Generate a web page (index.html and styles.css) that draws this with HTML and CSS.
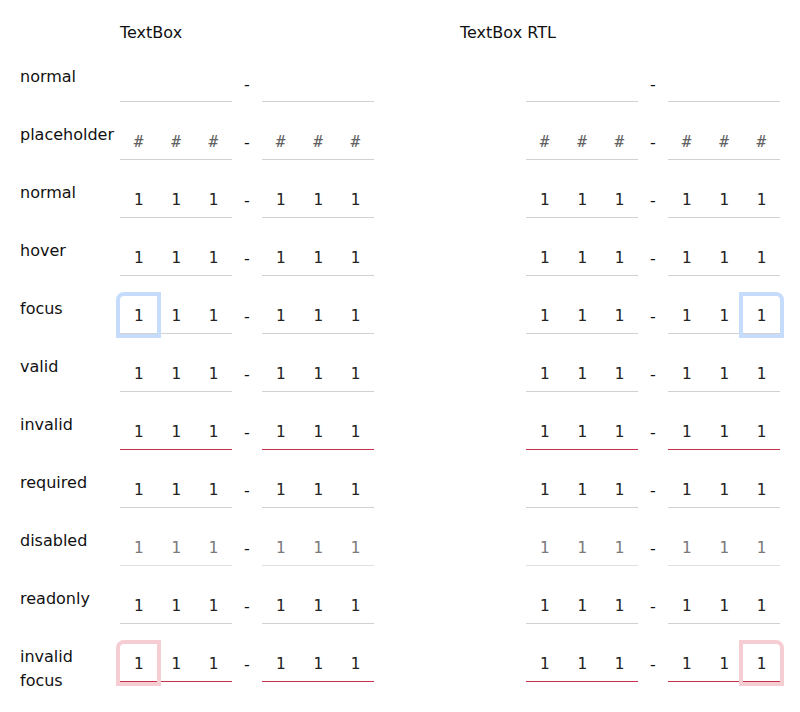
FILE: index.html
```html
<!DOCTYPE html>
<html>
<head>
<meta charset="utf-8">
<link rel="stylesheet" href="styles.css">
</head>
<body>
<div class="grid">
  <div class="label"></div>
  <div class="head">TextBox</div>
  <div class="head">TextBox RTL</div>

  <div class="label"><span>normal</span></div>
  <div class="col"><div class="field"><div class="group"><span class="cell"></span><span class="cell"></span><span class="cell"></span></div><span class="dash">-</span><div class="group"><span class="cell"></span><span class="cell"></span><span class="cell"></span></div></div></div>
  <div class="col" dir="rtl"><div class="field"><div class="group"><span class="cell"></span><span class="cell"></span><span class="cell"></span></div><span class="dash">-</span><div class="group"><span class="cell"></span><span class="cell"></span><span class="cell"></span></div></div></div>

  <div class="label"><span>placeholder</span></div>
  <div class="col"><div class="field ph"><div class="group"><span class="cell">#</span><span class="cell">#</span><span class="cell">#</span></div><span class="dash">-</span><div class="group"><span class="cell">#</span><span class="cell">#</span><span class="cell">#</span></div></div></div>
  <div class="col" dir="rtl"><div class="field ph"><div class="group"><span class="cell">#</span><span class="cell">#</span><span class="cell">#</span></div><span class="dash">-</span><div class="group"><span class="cell">#</span><span class="cell">#</span><span class="cell">#</span></div></div></div>

  <div class="label"><span>normal</span></div>
  <div class="col"><div class="field"><div class="group"><span class="cell">1</span><span class="cell">1</span><span class="cell">1</span></div><span class="dash">-</span><div class="group"><span class="cell">1</span><span class="cell">1</span><span class="cell">1</span></div></div></div>
  <div class="col" dir="rtl"><div class="field"><div class="group"><span class="cell">1</span><span class="cell">1</span><span class="cell">1</span></div><span class="dash">-</span><div class="group"><span class="cell">1</span><span class="cell">1</span><span class="cell">1</span></div></div></div>

  <div class="label"><span>hover</span></div>
  <div class="col"><div class="field"><div class="group"><span class="cell">1</span><span class="cell">1</span><span class="cell">1</span></div><span class="dash">-</span><div class="group"><span class="cell">1</span><span class="cell">1</span><span class="cell">1</span></div></div></div>
  <div class="col" dir="rtl"><div class="field"><div class="group"><span class="cell">1</span><span class="cell">1</span><span class="cell">1</span></div><span class="dash">-</span><div class="group"><span class="cell">1</span><span class="cell">1</span><span class="cell">1</span></div></div></div>

  <div class="label"><span>focus</span></div>
  <div class="col"><div class="field"><div class="group"><span class="cell focus">1</span><span class="cell">1</span><span class="cell">1</span></div><span class="dash">-</span><div class="group"><span class="cell">1</span><span class="cell">1</span><span class="cell">1</span></div></div></div>
  <div class="col" dir="rtl"><div class="field"><div class="group"><span class="cell focus">1</span><span class="cell">1</span><span class="cell">1</span></div><span class="dash">-</span><div class="group"><span class="cell">1</span><span class="cell">1</span><span class="cell">1</span></div></div></div>

  <div class="label"><span>valid</span></div>
  <div class="col"><div class="field"><div class="group"><span class="cell">1</span><span class="cell">1</span><span class="cell">1</span></div><span class="dash">-</span><div class="group"><span class="cell">1</span><span class="cell">1</span><span class="cell">1</span></div></div></div>
  <div class="col" dir="rtl"><div class="field"><div class="group"><span class="cell">1</span><span class="cell">1</span><span class="cell">1</span></div><span class="dash">-</span><div class="group"><span class="cell">1</span><span class="cell">1</span><span class="cell">1</span></div></div></div>

  <div class="label"><span>invalid</span></div>
  <div class="col"><div class="field invalid"><div class="group"><span class="cell">1</span><span class="cell">1</span><span class="cell">1</span></div><span class="dash">-</span><div class="group"><span class="cell">1</span><span class="cell">1</span><span class="cell">1</span></div></div></div>
  <div class="col" dir="rtl"><div class="field invalid"><div class="group"><span class="cell">1</span><span class="cell">1</span><span class="cell">1</span></div><span class="dash">-</span><div class="group"><span class="cell">1</span><span class="cell">1</span><span class="cell">1</span></div></div></div>

  <div class="label"><span>required</span></div>
  <div class="col"><div class="field"><div class="group"><span class="cell">1</span><span class="cell">1</span><span class="cell">1</span></div><span class="dash">-</span><div class="group"><span class="cell">1</span><span class="cell">1</span><span class="cell">1</span></div></div></div>
  <div class="col" dir="rtl"><div class="field"><div class="group"><span class="cell">1</span><span class="cell">1</span><span class="cell">1</span></div><span class="dash">-</span><div class="group"><span class="cell">1</span><span class="cell">1</span><span class="cell">1</span></div></div></div>

  <div class="label"><span>disabled</span></div>
  <div class="col"><div class="field disabled"><div class="group"><span class="cell">1</span><span class="cell">1</span><span class="cell">1</span></div><span class="dash">-</span><div class="group"><span class="cell">1</span><span class="cell">1</span><span class="cell">1</span></div></div></div>
  <div class="col" dir="rtl"><div class="field disabled"><div class="group"><span class="cell">1</span><span class="cell">1</span><span class="cell">1</span></div><span class="dash">-</span><div class="group"><span class="cell">1</span><span class="cell">1</span><span class="cell">1</span></div></div></div>

  <div class="label"><span>readonly</span></div>
  <div class="col"><div class="field"><div class="group"><span class="cell">1</span><span class="cell">1</span><span class="cell">1</span></div><span class="dash">-</span><div class="group"><span class="cell">1</span><span class="cell">1</span><span class="cell">1</span></div></div></div>
  <div class="col" dir="rtl"><div class="field"><div class="group"><span class="cell">1</span><span class="cell">1</span><span class="cell">1</span></div><span class="dash">-</span><div class="group"><span class="cell">1</span><span class="cell">1</span><span class="cell">1</span></div></div></div>

  <div class="label"><span>invalid focus</span></div>
  <div class="col"><div class="field invalid"><div class="group"><span class="cell focus">1</span><span class="cell">1</span><span class="cell">1</span></div><span class="dash">-</span><div class="group"><span class="cell">1</span><span class="cell">1</span><span class="cell">1</span></div></div></div>
  <div class="col" dir="rtl"><div class="field invalid"><div class="group"><span class="cell focus">1</span><span class="cell">1</span><span class="cell">1</span></div><span class="dash">-</span><div class="group"><span class="cell">1</span><span class="cell">1</span><span class="cell">1</span></div></div></div>
</div>
</body>
</html>
```
FILE: styles.css
```css
html, body {
  margin: 0;
  padding: 0;
  background: #ffffff;
}
body {
  padding: 20px;
  font-family: "DejaVu Sans", sans-serif;
  font-size: 16px;
  color: #242424;
}
.grid {
  display: grid;
  grid-template-columns: 100px 340px 320px;
  grid-auto-rows: 38px;
  grid-template-rows: 24px;
  row-gap: 20px;
}
.head {
  line-height: 24px;
  padding-top: 1px;
  color: #111;
}
.label {
  line-height: 24px;
  padding-top: 1px;
  color: #111;
}
.label span {
  display: block;
  max-width: 96px;
}
.col {
  display: flex;
  width: 320px;
}
.field {
  display: flex;
  width: 254px;
  height: 38px;
}
.group {
  display: flex;
  width: 112px;
}
.cell {
  flex: 1;
  height: 37px;
  box-sizing: border-box;
  height: 38px;
  padding-top: 2px;
  border-bottom: 1px solid #d1d1d1;
  display: flex;
  align-items: center;
  justify-content: center;
  font-family: "DejaVu Sans Mono", monospace;
  font-size: 16px;
  color: #242424;
  background: #fff;
}
.dash {
  width: 30px;
  padding-top: 2px;
  display: flex;
  align-items: center;
  justify-content: center;
  color: #111;
  font-size: 16px;
}
.ph .cell {
  color: #616161;
}
.disabled .cell {
  color: #7a7a7a;
  border-bottom-color: #e0e0e0;
}
.invalid .cell {
  border-bottom-color: #c4314b;
}
.cell.focus {
  position: relative;
  z-index: 1;
  border-start-start-radius: 4px;
  box-shadow: 0 0 0 4px #c5dcfd;
}
.invalid .cell.focus {
  box-shadow: 0 0 0 4px #f6cdd3;
}
```
